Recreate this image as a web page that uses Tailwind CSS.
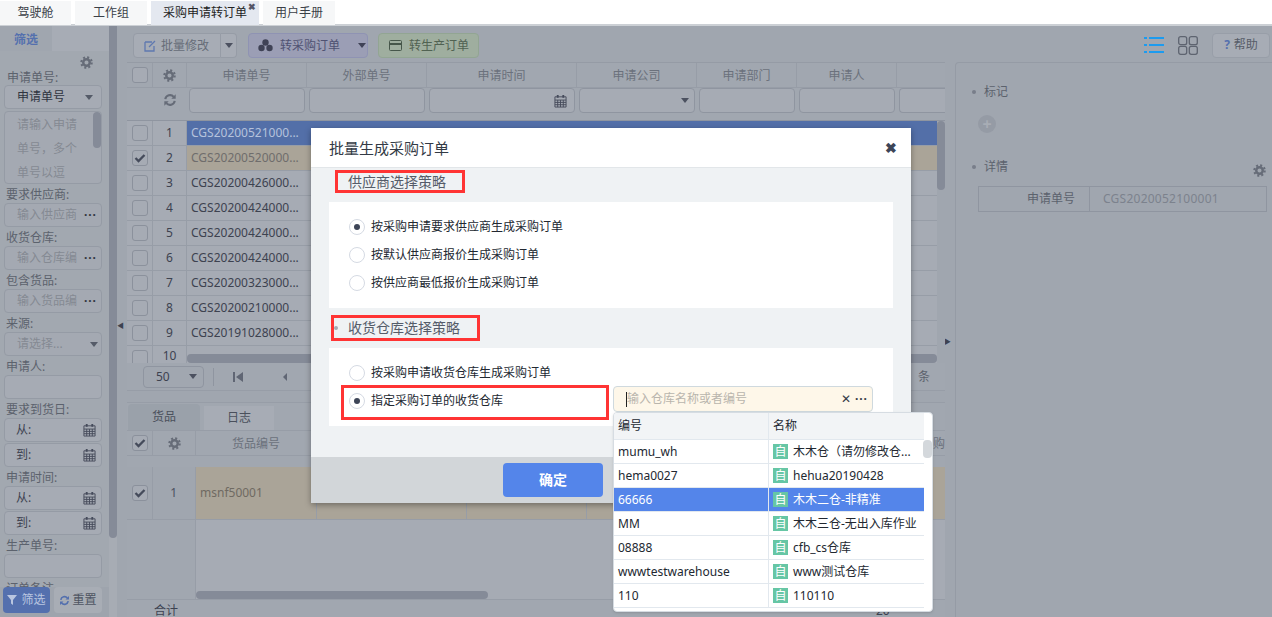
<!DOCTYPE html>
<html lang="zh">
<head>
<meta charset="utf-8">
<script src="https://cdn.jsdelivr.net/npm/@tailwindcss/browser@4"></script>
</head>
<body class="w-[1272px] h-[617px] overflow-hidden relative bg-[#a0a6af] font-['Noto_Sans','Noto_Sans_CJK_SC',sans-serif] text-xs text-[#3d4250]">
<svg class="hidden">
<symbol id="gear" viewBox="0 0 16 16"><circle cx="8" cy="8" r="4" fill="none" stroke="currentColor" stroke-width="3"/><circle cx="8" cy="8" r="6.4" fill="none" stroke="currentColor" stroke-width="2.6" stroke-dasharray="2.5 2.53"/></symbol>
<symbol id="sync" viewBox="0 0 16 16"><path d="M2.6 7a5.5 5.5 0 0 1 9.6-2.6M13.4 9a5.5 5.5 0 0 1-9.6 2.6" fill="none" stroke="currentColor" stroke-width="2.4"/><path d="M14.5 1.5v5h-5zM1.5 14.5v-5h5z" fill="currentColor"/></symbol>
<symbol id="cal" viewBox="0 0 14 14"><path d="M1 2.5h12v11H1zM1 6h12M1 8.5h12M1 11h12M4 6v7.500M7 6v7.500M10 6v7.500" fill="none" stroke="currentColor"/><path d="M3 .5h2v3H3zM9 .5h2v3H9z" fill="currentColor"/></symbol>
<symbol id="check" viewBox="0 0 12 12"><path d="M1.500 6l3 3 6-6" fill="none" stroke="currentColor" stroke-width="2.300"/></symbol>
<symbol id="caret" viewBox="0 0 10 6"><path d="M0 0h10L5 6z" fill="currentColor"/></symbol>
</svg>

<!-- tabs -->
<header class="h-[26px] bg-white border-b-2 border-[#ccd0d5] flex items-stretch pt-px gap-1 text-[#3a3f47]">
  <div class="w-[71px] h-6 bg-[#f6f7f8] flex items-center justify-center">驾驶舱</div>
  <div class="w-[72px] h-6 bg-[#f6f7f8] flex items-center justify-center">工作组</div>
  <div class="w-[108px] h-6 bg-[#e4e8f0] flex items-center pl-3 relative text-[#222]">采购申请转订单<span class="absolute left-[97px] top-0 text-[9px] leading-[12px] font-bold text-[#556]">✖</span></div>
  <div class="w-[72px] h-6 bg-[#f6f7f8] flex items-center justify-center">用户手册</div>
</header>

<div class="flex h-[591px]">
  <!-- sidebar -->
  <aside class="w-[109px] shrink-0 bg-[#a2a8b0] relative overflow-hidden text-[#5c626d]">
    <div class="flex h-[25px]">
      <div class="w-[52px] bg-[#a0a6af] font-bold text-[#5470ae] flex items-center justify-center pt-0.5 text-xs">筛选</div>
      <div class="flex-1 bg-[#a7acb5]"></div>
    </div>
    <div class="h-[17px] flex justify-end pr-4 pt-[5px] text-[#666c78]"><svg class="w-[13px] h-[13px]"><use href="#gear"/></svg></div>
    <div class="h-[17px] leading-[19px] pl-[7px]">申请单号:</div>
    <div class="mx-1 w-[98px] h-6 border border-[#959ba5] rounded-sm bg-[#a6abb4] flex items-center justify-between px-3 text-[#2f3440]">申请单号<svg class="w-2 h-[5px] text-[#555b68] -mr-1"><use href="#caret"/></svg></div>
    <div class="mx-1 mt-0.5 w-[98px] h-[73px] border border-[#959ba5] rounded-sm bg-[#a4a9b2] pl-3 pt-px text-[#858a93] leading-[24px] relative overflow-hidden">请输入申请<br>单号，多个<br>单号以逗
      <div class="absolute right-0 top-0 w-2 h-[36px] rounded bg-[#858b98]"></div>
    </div>
    <div class="h-[19px] leading-[21px] pl-1.5">要求供应商:</div>
    <div class="mx-1 w-[98px] h-6 border border-[#959ba5] rounded-sm bg-[#a4a9b2] flex items-center justify-between pl-3 pr-1 text-[#858a93]"><span class="whitespace-nowrap">输入供应商</span><span class="font-bold text-[#30353f] tracking-[1px]">···</span></div>
    <div class="h-[19px] leading-[21px] pl-1.5">收货仓库:</div>
    <div class="mx-1 w-[98px] h-6 border border-[#959ba5] rounded-sm bg-[#a4a9b2] flex items-center justify-between pl-3 pr-1 text-[#858a93]"><span class="whitespace-nowrap">输入仓库编</span><span class="font-bold text-[#30353f] tracking-[1px]">···</span></div>
    <div class="h-[19px] leading-[21px] pl-1.5">包含货品:</div>
    <div class="mx-1 w-[98px] h-6 border border-[#959ba5] rounded-sm bg-[#a4a9b2] flex items-center justify-between pl-3 pr-1 text-[#858a93]"><span class="whitespace-nowrap">输入货品编</span><span class="font-bold text-[#30353f] tracking-[1px]">···</span></div>
    <div class="h-[19px] leading-[21px] pl-1.5">来源:</div>
    <div class="mx-1 w-[98px] h-6 border border-[#959ba5] rounded-sm bg-[#a4a9b2] flex items-center justify-between pl-3 pr-[3px] text-[#858a93]">请选择...<svg class="w-2 h-[5px] text-[#555b68]"><use href="#caret"/></svg></div>
    <div class="h-[19px] leading-[21px] pl-1.5">申请人:</div>
    <div class="mx-1 w-[98px] h-6 border border-[#959ba5] rounded-sm bg-[#a6abb4]"></div>
    <div class="h-[19px] leading-[21px] pl-1.5">要求到货日:</div>
    <div class="mx-1 w-[98px] h-6 border border-[#959ba5] rounded-sm bg-[#a6abb4] flex items-center justify-between pl-[11px] pr-[5px] text-[#3d4250]">从:<svg class="w-[13px] h-[14px] text-[#454b5b]"><use href="#cal"/></svg></div>
    <div class="mx-1 mt-px w-[98px] h-6 border border-[#959ba5] rounded-sm bg-[#a6abb4] flex items-center justify-between pl-[11px] pr-[5px] text-[#3d4250]">到:<svg class="w-[13px] h-[14px] text-[#454b5b]"><use href="#cal"/></svg></div>
    <div class="h-[19px] leading-[21px] pl-1.5">申请时间:</div>
    <div class="mx-1 w-[98px] h-6 border border-[#959ba5] rounded-sm bg-[#a6abb4] flex items-center justify-between pl-[11px] pr-[5px] text-[#3d4250]">从:<svg class="w-[13px] h-[14px] text-[#454b5b]"><use href="#cal"/></svg></div>
    <div class="mx-1 mt-px w-[98px] h-6 border border-[#959ba5] rounded-sm bg-[#a6abb4] flex items-center justify-between pl-[11px] pr-[5px] text-[#3d4250]">到:<svg class="w-[13px] h-[14px] text-[#454b5b]"><use href="#cal"/></svg></div>
    <div class="h-[19px] leading-[21px] pl-1.5">生产单号:</div>
    <div class="mx-1 w-[98px] h-6 border border-[#959ba5] rounded-sm bg-[#a6abb4]"></div>
    <div class="h-[9px] leading-[21px] pl-1.5 overflow-hidden">订单备注</div>
    <div class="absolute left-0 right-0 bottom-0 h-[30px] bg-[#9ea4ad] flex gap-1 pl-[3px] pr-[7px] pb-1">
      <div class="w-[47px] h-[26px] rounded-sm bg-[#5470ae] text-[#b9c6e0] flex items-center justify-center gap-1"><svg class="w-2.5 h-2.5" viewBox="0 0 10 10"><path d="M0 0h10L6 5v5L4 8.500V5z" fill="currentColor"/></svg>筛选</div>
      <div class="w-[48px] h-[26px] rounded-sm bg-[#a8adb5] text-[#4f5562] flex items-center justify-center gap-0.5"><svg class="w-[11px] h-[11px] text-[#5470ae]"><use href="#sync"/></svg>重置</div>
    </div>
  </aside>
  <div class="w-2 shrink-0 bg-[#a7acb4] relative"><div class="w-2 h-[512px] rounded-b bg-[#858b98]"></div></div>

  <!-- main -->
  <main class="w-[838px] shrink-0 px-2.5 relative">
    <span class="absolute left-0 top-[295px] text-[#3d4250] text-[7px]">◀</span>
    <span class="absolute right-[4px] top-[311px] text-[#3d4250] text-[7px]">▶</span>
    <div class="h-9 flex items-start pt-[7px] text-[#666c78]">
      <div class="ml-1.5 w-[88px] h-[25px] border border-[#969ca6] rounded-l-sm bg-[#a7acb5] flex items-center pl-[10px] gap-[5px] whitespace-nowrap"><svg class="w-3 h-3 text-[#5f78b0]" viewBox="0 0 12 12"><path d="M1 2h7M1 2v9h9V6M5 7l6-6" fill="none" stroke="currentColor" stroke-width="1.300"/></svg>批量修改</div>
      <div class="w-4 h-[25px] border border-l-0 border-[#969ca6] rounded-r-sm bg-[#a7acb5] flex items-center justify-center"><svg class="w-2 h-[5px] text-[#4c5160]"><use href="#caret"/></svg></div>
      <div class="ml-[11px] w-[120px] h-[25px] border border-[#8f93b3] rounded-sm bg-[#9b9eb5] flex items-center pl-[9px] gap-[7px] text-[#4f5272] whitespace-nowrap"><svg class="w-[15px] h-[13px] text-[#3f4256] shrink-0" viewBox="0 0 15 13"><circle cx="7.500" cy="3.500" r="3.200" fill="currentColor"/><circle cx="3.500" cy="9" r="3.200" fill="currentColor"/><circle cx="11.500" cy="9" r="3.200" fill="currentColor"/></svg>转采购订单<svg class="w-2 h-[5px] ml-[11px] text-[#3f4256] shrink-0"><use href="#caret"/></svg></div>
      <div class="ml-2.5 w-[101px] h-[25px] border border-[#92a593] rounded-sm bg-[#9fae9f] flex items-center pl-2.5 gap-[7px] text-[#516252] whitespace-nowrap"><svg class="w-[13px] h-[11px] text-[#46564a]" viewBox="0 0 13 11"><rect x=".5" y=".5" width="12" height="10" rx="1" fill="none" stroke="currentColor"/><path d="M1 3h11v2H1z" fill="currentColor"/></svg>转生产订单</div>
    </div>

    <!-- upper table -->
    <div class="h-[301px] overflow-hidden border-t border-[#959ba5] relative bg-[#a6abb4]">
      <div class="h-[25px] flex bg-[#a1a7b0] text-[#6b717c] border-b border-[#979da7] text-center leading-[26px]">
        <div class="w-[26px] flex items-center justify-center border-r border-[#979da7]"><span class="w-4 h-4 border border-[#8b919c] rounded-[3px] bg-[#a6abb4]"></span></div>
        <div class="w-[34px] flex items-center justify-center border-r border-[#979da7] text-[#666c78]"><svg class="w-[13px] h-[13px]"><use href="#gear"/></svg></div>
        <div class="w-[120px] border-r border-[#979da7]">申请单号</div><div class="w-[120px] border-r border-[#979da7]">外部单号</div><div class="w-[150px] border-r border-[#979da7]">申请时间</div><div class="w-[120px] border-r border-[#979da7]">申请公司</div><div class="w-[100px] border-r border-[#979da7]">申请部门</div><div class="w-[100px] border-r border-[#979da7]">申请人</div><div class="flex-1"></div>
      </div>
      <div class="h-[33px] flex bg-[#a1a7b0] border-b border-[#8f95a0]">
        <div class="w-[26px]"></div>
        <div class="w-[34px] flex justify-center pt-[5px] text-[#666c78]"><svg class="w-[14px] h-[14px]"><use href="#sync"/></svg></div>
        <div class="w-[120px] px-0.5"><div class="h-[25px] border border-[#8f95a0] rounded-sm bg-[#a6abb4]"></div></div>
        <div class="w-[120px] px-0.5"><div class="h-[25px] border border-[#8f95a0] rounded-sm bg-[#a6abb4]"></div></div>
        <div class="w-[150px] px-0.5"><div class="h-[25px] border border-[#8f95a0] rounded-sm bg-[#a6abb4] flex items-center justify-end pr-[7px]"><svg class="w-[13px] h-[14px] text-[#454b5b]"><use href="#cal"/></svg></div></div>
        <div class="w-[120px] px-0.5"><div class="h-[25px] border border-[#8f95a0] rounded-sm bg-[#a6abb4] flex items-center justify-end pr-[5px]"><svg class="w-2 h-[5px] text-[#4c5160]"><use href="#caret"/></svg></div></div>
        <div class="w-[100px] px-0.5"><div class="h-[25px] border border-[#8f95a0] rounded-sm bg-[#a6abb4]"></div></div>
        <div class="w-[100px] px-0.5"><div class="h-[25px] border border-[#8f95a0] rounded-sm bg-[#a6abb4]"></div></div>
        <div class="flex-1 pl-0.5"><div class="h-[25px] border border-r-0 border-[#8f95a0] rounded-l-sm bg-[#a6abb4]"></div></div>
      </div>
      <div class="h-[25px] flex border-b border-[#979da7]"><div class="w-[26px] flex items-center justify-center border-r border-[#979da7]"><span class="w-4 h-4 border border-[#8b919c] rounded-[3px] bg-[#a6abb4]"></span></div><div class="w-[34px] flex items-center justify-center border-r border-[#979da7]">1</div><div class="flex-1 bg-[#536fa8] text-[#b5c2dc] pl-1 flex items-center">CGS20200521000...</div></div>
      <div class="h-[25px] flex border-b border-[#979da7]"><div class="w-[26px] flex items-center justify-center border-r border-[#979da7]"><span class="w-4 h-4 border border-[#8b919c] rounded-[3px] bg-[#a6abb4] flex items-center justify-center text-[#454b5b]"><svg class="w-3 h-3"><use href="#check"/></svg></span></div><div class="w-[34px] flex items-center justify-center border-r border-[#979da7]">2</div><div class="flex-1 bg-[#aaa498] text-[#6f6d6c] pl-1 flex items-center">CGS20200520000...</div></div>
      <div class="h-[25px] flex border-b border-[#979da7]"><div class="w-[26px] flex items-center justify-center border-r border-[#979da7]"><span class="w-4 h-4 border border-[#8b919c] rounded-[3px] bg-[#a6abb4]"></span></div><div class="w-[34px] flex items-center justify-center border-r border-[#979da7]">3</div><div class="flex-1 pl-1 flex items-center">CGS20200426000...</div></div>
      <div class="h-[25px] flex border-b border-[#979da7]"><div class="w-[26px] flex items-center justify-center border-r border-[#979da7]"><span class="w-4 h-4 border border-[#8b919c] rounded-[3px] bg-[#a6abb4]"></span></div><div class="w-[34px] flex items-center justify-center border-r border-[#979da7]">4</div><div class="flex-1 pl-1 flex items-center">CGS20200424000...</div></div>
      <div class="h-[25px] flex border-b border-[#979da7]"><div class="w-[26px] flex items-center justify-center border-r border-[#979da7]"><span class="w-4 h-4 border border-[#8b919c] rounded-[3px] bg-[#a6abb4]"></span></div><div class="w-[34px] flex items-center justify-center border-r border-[#979da7]">5</div><div class="flex-1 pl-1 flex items-center">CGS20200424000...</div></div>
      <div class="h-[25px] flex border-b border-[#979da7]"><div class="w-[26px] flex items-center justify-center border-r border-[#979da7]"><span class="w-4 h-4 border border-[#8b919c] rounded-[3px] bg-[#a6abb4]"></span></div><div class="w-[34px] flex items-center justify-center border-r border-[#979da7]">6</div><div class="flex-1 pl-1 flex items-center">CGS20200424000...</div></div>
      <div class="h-[25px] flex border-b border-[#979da7]"><div class="w-[26px] flex items-center justify-center border-r border-[#979da7]"><span class="w-4 h-4 border border-[#8b919c] rounded-[3px] bg-[#a6abb4]"></span></div><div class="w-[34px] flex items-center justify-center border-r border-[#979da7]">7</div><div class="flex-1 pl-1 flex items-center">CGS20200323000...</div></div>
      <div class="h-[25px] flex border-b border-[#979da7]"><div class="w-[26px] flex items-center justify-center border-r border-[#979da7]"><span class="w-4 h-4 border border-[#8b919c] rounded-[3px] bg-[#a6abb4]"></span></div><div class="w-[34px] flex items-center justify-center border-r border-[#979da7]">8</div><div class="flex-1 pl-1 flex items-center">CGS20200210000...</div></div>
      <div class="h-[25px] flex border-b border-[#979da7]"><div class="w-[26px] flex items-center justify-center border-r border-[#979da7]"><span class="w-4 h-4 border border-[#8b919c] rounded-[3px] bg-[#a6abb4]"></span></div><div class="w-[34px] flex items-center justify-center border-r border-[#979da7]">9</div><div class="flex-1 pl-1 flex items-center">CGS20191028000...</div></div>
      <div class="h-[17px] flex overflow-hidden"><div class="w-[26px] flex items-start pt-1 justify-center border-r border-[#979da7]"><span class="w-4 h-4 shrink-0 border border-[#8b919c] rounded-[3px] bg-[#a6abb4]"></span></div><div class="w-[34px] flex justify-center border-r border-[#979da7] leading-[20px]">10</div></div>
      <div class="absolute right-0 top-[58px] bottom-0 w-2 bg-[#a0a6af]"><div class="h-[69px] rounded bg-[#858b98]"></div></div>
      <div class="absolute left-[60px] right-2 bottom-0 h-[9px] rounded bg-[#858b98]"></div>
    </div>

    <!-- pager -->
    <div class="h-7 flex items-center bg-[#a1a7b0] border-b border-[#979da7] relative">
      <div class="ml-4 w-[61px] h-[22px] border border-[#8f95a0] rounded-sm flex items-center justify-between pl-3 pr-1.5 text-[#3d4250]">50<svg class="w-2 h-[5px] text-[#4c5160]"><use href="#caret"/></svg></div>
      <div class="ml-[9px] h-[18px] border-l border-[#8f95a0]"></div>
      <svg class="ml-[19px] w-2.5 h-2.5 text-[#606674]" viewBox="0 0 10 10"><path d="M0 0h2v10H0zM10 0v10L3 5z" fill="currentColor"/></svg>
      <svg class="ml-[40px] w-1 h-2 text-[#606674]" viewBox="0 0 4 8"><path d="M4 0v8L0 4z" fill="currentColor"/></svg>
      <span class="absolute right-[15px] text-[#5c626d]">条</span>
    </div>

    <!-- lower tabs -->
    <div class="mt-[11px] h-[29px] flex items-end gap-1 border-y border-[#979da7] bg-[#a1a7b0] pl-px text-[#4a505c]">
      <div class="w-[72px] h-[26px] bg-[#9aa1aa] rounded-t-sm flex items-center justify-center">货品</div>
      <div class="w-[70px] h-6 bg-[#a7acb5] flex items-center justify-center">日志</div>
    </div>
    <div class="h-[25px] flex bg-[#a1a7b0] text-[#6b717c] border-b border-[#979da7] text-center leading-[26px]">
      <div class="w-[26px] flex items-center justify-center border-r border-[#979da7]"><span class="w-4 h-4 border border-[#8b919c] rounded-[3px] bg-[#a6abb4] flex items-center justify-center text-[#454b5b]"><svg class="w-3 h-3"><use href="#check"/></svg></span></div>
      <div class="w-[43px] flex items-center justify-center border-r border-[#979da7] text-[#666c78]"><svg class="w-[13px] h-[13px]"><use href="#gear"/></svg></div>
      <div class="w-[120px]">货品编号</div>
      <div class="ml-auto text-right">购</div>
    </div>
    <div class="h-[11px] bg-[#a1a7b0]"></div>
    <div class="h-[53px] flex border-b border-[#979da7]">
      <div class="w-[26px] flex items-center justify-center border-r border-[#979da7]"><span class="w-4 h-4 border border-[#8b919c] rounded-[3px] bg-[#a6abb4] flex items-center justify-center text-[#454b5b]"><svg class="w-3 h-3"><use href="#check"/></svg></span></div>
      <div class="w-[43px] flex items-center justify-end pr-[18px] border-r border-[#979da7] text-[#4c5160]">1</div>
      <div class="flex-1 flex bg-[#aaa498] text-[#6f6a62]">
        <div class="w-[121px] pl-1 flex items-center border-r border-[#979da7]">msnf50001</div><div class="w-[150px] border-r border-[#979da7]"></div><div class="w-[120px] border-r border-[#979da7]"></div>
      </div>
    </div>
    <div class="h-[80px] flex bg-[#a6abb4] relative border-b border-[#979da7]">
      <div class="w-[69px] bg-[#a1a7b0] border-r border-[#979da7]"></div>
      <div class="absolute left-[69px] bottom-0 w-[292px] h-2 rounded bg-[#858b98]"></div>
    </div>
    <div class="flex bg-[#a1a7b0] h-[18px] relative pt-[3px] overflow-hidden"><span class="ml-[27px] text-[#3d4250]">合计</span><span class="absolute left-[749px] top-[3px] text-[#3d4250]">20</span></div>
  </main>

  <!-- right panel -->
  <section class="flex-1 relative">
    <div class="h-9 flex items-center justify-end pr-0.5 pt-0.5">
      <svg class="w-5 h-[18px] text-[#1c9bef] mr-3.5" viewBox="0 0 20 18"><path d="M0 1h3v2H0zM5 1h15v2H5zM0 8h3v2H0zM5 8h15v2H5zM0 15h3v2H0zM5 15h15v2H5z" fill="currentColor"/></svg>
      <svg class="w-5 h-[19px] text-[#5e6470] mr-3.5" viewBox="0 0 20 19" fill="none" stroke="currentColor" stroke-width="1.300"><rect x=".7" y=".7" width="8" height="8" rx="2"/><rect x="11.300" y=".7" width="8" height="8" rx="2"/><rect x=".7" y="10.300" width="8" height="8" rx="2"/><rect x="11.300" y="10.300" width="8" height="8" rx="2"/></svg>
      <div class="w-[58px] h-[25px] bg-[#a7acb5] border border-[#989ea8] rounded-sm flex items-center justify-center gap-1 text-[#565c68]"><b class="text-[#5470ae]">?</b>帮助</div>
    </div>
    <div class="h-[555px] border-l border-t border-[#959ba5] rounded-tl-sm text-[#5c626d]">
      <div class="h-[44px] pl-4 flex items-center gap-2 pt-[13px]"><span class="w-1 h-1 rounded-full bg-[#787e8a]"></span><span>标记</span></div>
      <div class="ml-[22px] mt-2 w-[18px] h-[18px] rounded-full bg-[#959ba5] flex items-center justify-center text-[#a8adb5] font-bold text-base leading-none">+</div>
      <div class="mt-[22px] h-[24px] pl-4 flex items-center gap-2 relative"><span class="w-1 h-1 rounded-full bg-[#787e8a]"></span><span>详情</span>
        <svg class="absolute right-[6px] top-[9px] w-[13px] h-[13px] text-[#666c78]"><use href="#gear"/></svg></div>
      <div class="ml-[22px] mt-[7px] w-[289px] h-[26px] border border-[#8f95a0] flex">
        <div class="w-[111px] border-r border-[#8f95a0] flex items-center justify-end pr-[14px]">申请单号</div>
        <div class="flex-1 pl-[13px] flex items-center text-[#7c828d] tracking-[0.25px]">CGS2020052100001</div>
      </div>
    </div>
  </section>
</div>

<!-- modal -->
<div class="absolute left-[311px] top-[128px] w-[600px] h-[375px] bg-[#eff2f4] shadow-[0_2px_6px_rgba(0,0,0,0.35)] flex flex-col">
  <div class="h-10 shrink-0 bg-white border-b border-[#e2e6e9] flex items-center justify-between px-[18px] pr-[14px] text-[15px] text-[#333a45]">
    <span>批量生成采购订单</span><span class="text-sm font-bold text-[#3d4557] leading-none">✖</span>
  </div>
  <div class="flex-1 relative">
    <div class="h-[34px] pl-[37px] pt-[2px] text-sm text-[#555c69] leading-[24px]">供应商选择策略</div>
    <div class="mx-[18px] h-[106px] bg-white pt-[11px] pl-5 text-[#222831]">
      <div class="h-7 flex items-center gap-[6px]"><span class="w-4 h-4 rounded-full border border-[#d5dae3] flex items-center justify-center"><span class="w-[6px] h-[6px] rounded-full bg-[#3d4557]"></span></span>按采购申请要求供应商生成采购订单</div>
      <div class="h-7 flex items-center gap-[6px]"><span class="w-4 h-4 rounded-full border border-[#d5dae3]"></span>按默认供应商报价生成采购订单</div>
      <div class="h-7 flex items-center gap-[6px]"><span class="w-4 h-4 rounded-full border border-[#d5dae3]"></span>按供应商最低报价生成采购订单</div>
    </div>
    <div class="h-[40px] pl-[23px] flex items-center gap-[10px] text-sm text-[#555c69]"><span class="w-1 h-1 rounded-full bg-[#a5abb4]"></span>收货仓库选择策略</div>
    <div class="mx-[18px] h-[78px] bg-white pt-[11px] pl-5 text-[#222831]">
      <div class="h-7 flex items-center gap-[6px]"><span class="w-4 h-4 rounded-full border border-[#d5dae3]"></span>按采购申请收货仓库生成采购订单</div>
      <div class="h-7 flex items-center gap-[6px]"><span class="w-4 h-4 rounded-full border border-[#d5dae3] flex items-center justify-center"><span class="w-[6px] h-[6px] rounded-full bg-[#3d4557]"></span></span>指定采购订单的收货仓库</div>
    </div>
  </div>
  <div class="h-[46px] shrink-0 bg-[#d2d6d9] flex items-start pt-[6px] pl-[192px]">
    <div class="w-[100px] h-[34px] rounded bg-[#5485ea] text-white text-sm font-bold flex items-center justify-center">确定</div>
  </div>
</div>

<!-- red annotation boxes -->
<div class="absolute left-[335px] top-[170px] w-[130px] h-[23px] border-[3px] border-[#ff3434]"></div>
<div class="absolute left-[331px] top-[315px] w-[149px] h-[26px] border-[3px] border-[#ff3434]"></div>
<div class="absolute left-[341px] top-[385px] w-[268px] h-[35px] border-[3px] border-[#ff3434]"></div>

<!-- warehouse input -->
<div class="absolute left-[613px] top-[386px] w-[260px] h-[26px] bg-[#fef7e9] border border-[#cfd9de] rounded-sm flex items-center pl-3 pr-1 text-[#b9b5ad]">
  <span class="w-px h-[15px] bg-[#222]"></span>输入仓库名称或者编号<span class="ml-auto text-[#333a45]">✕</span><span class="ml-1 font-bold text-[#333a45] tracking-[1px]">···</span>
</div>

<!-- dropdown -->
<div class="absolute left-[613px] top-[412px] w-[320px] h-[200px] bg-white border border-[#d6dce2] rounded-sm overflow-hidden text-[#222831] shadow-sm">
  <div class="w-[310px]">
    <div class="h-[27px] flex bg-[#f2f4f6] border-b border-[#e2e8ee]"><div class="w-[155px] pl-1 flex items-center border-r border-[#e2e8ee]">编号</div><div class="pl-1 flex items-center">名称</div></div>
    <div class="h-6 flex border-b border-[#e2e8ee]"><div class="w-[155px] pl-1 flex items-center border-r border-[#e2e8ee]">mumu_wh</div><div class="pl-1 flex items-center gap-[5px]"><span class="w-[15px] h-[15px] bg-[#66c6a5] text-white flex items-center justify-center text-xs">自</span>木木仓（请勿修改仓...</div></div>
    <div class="h-6 flex border-b border-[#e2e8ee]"><div class="w-[155px] pl-1 flex items-center border-r border-[#e2e8ee]">hema0027</div><div class="pl-1 flex items-center gap-[5px]"><span class="w-[15px] h-[15px] bg-[#66c6a5] text-white flex items-center justify-center text-xs">自</span>hehua20190428</div></div>
    <div class="h-6 flex bg-[#5485ea] text-white border-b border-[#e2e8ee]"><div class="w-[155px] pl-1 flex items-center border-r border-[#e2e8ee]">66666</div><div class="pl-1 flex items-center gap-[5px]"><span class="w-[15px] h-[15px] bg-[#66c6a5] text-white flex items-center justify-center text-xs">自</span>木木二仓-非精准</div></div>
    <div class="h-6 flex border-b border-[#e2e8ee]"><div class="w-[155px] pl-1 flex items-center border-r border-[#e2e8ee]">MM</div><div class="pl-1 flex items-center gap-[5px]"><span class="w-[15px] h-[15px] bg-[#66c6a5] text-white flex items-center justify-center text-xs">自</span>木木三仓-无出入库作业</div></div>
    <div class="h-6 flex border-b border-[#e2e8ee]"><div class="w-[155px] pl-1 flex items-center border-r border-[#e2e8ee]">08888</div><div class="pl-1 flex items-center gap-[5px]"><span class="w-[15px] h-[15px] bg-[#66c6a5] text-white flex items-center justify-center text-xs">自</span>cfb_cs仓库</div></div>
    <div class="h-6 flex border-b border-[#e2e8ee]"><div class="w-[155px] pl-1 flex items-center border-r border-[#e2e8ee]">wwwtestwarehouse</div><div class="pl-1 flex items-center gap-[5px]"><span class="w-[15px] h-[15px] bg-[#66c6a5] text-white flex items-center justify-center text-xs">自</span>www测试仓库</div></div>
    <div class="h-6 flex border-b border-[#e2e8ee]"><div class="w-[155px] pl-1 flex items-center border-r border-[#e2e8ee]">110</div><div class="pl-1 flex items-center gap-[5px]"><span class="w-[15px] h-[15px] bg-[#66c6a5] text-white flex items-center justify-center text-xs">自</span>110110</div></div>
  </div>
  <div class="absolute right-0 top-[27px] w-[9px] h-[18px] rounded bg-[#d4d8dc]"></div>
</div>
</body>
</html>
